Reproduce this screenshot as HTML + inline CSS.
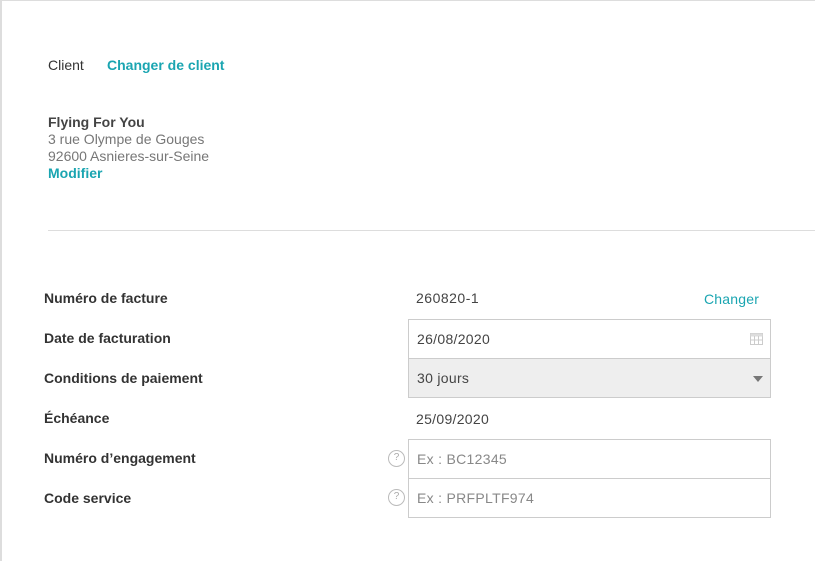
<!DOCTYPE html>
<html><head><meta charset="utf-8"><style>
*{margin:0;padding:0;box-sizing:border-box}
body{width:815px;height:561px;background:#fff;font-family:"Liberation Sans",sans-serif;position:relative;overflow:hidden;color:#333}
.frame{position:absolute;left:0;top:0;width:815px;height:561px;border-left:2px solid #ddd;border-top:1px solid #ddd}
.t{position:absolute;font-size:14px;line-height:17px;white-space:nowrap}
.teal{color:#1aa5b1;font-weight:bold}
.gray{color:#777}
.lbl{position:absolute;left:44px;font-size:14px;color:#333;font-weight:bold;letter-spacing:0px}
.box{position:absolute;left:408px;width:363px;border:1px solid #ccc;background:#fff;font-size:14px;padding-left:8px;color:#444;letter-spacing:0.3px}
.q{position:absolute;left:388px;width:17px;height:17px;border:1.5px solid #bbb;border-radius:50%;color:#aaa;font-size:10px;text-align:center;line-height:14px}
</style></head><body>
<div class="frame"></div>
<div class="t" style="left:48px;top:57px;color:#333">Client</div>
<div class="t teal" style="left:107px;top:57px">Changer de client</div>
<div class="t" style="left:48px;top:114px;color:#444;font-weight:bold">Flying For You</div>
<div class="t gray" style="left:48px;top:131px">3 rue Olympe de Gouges</div>
<div class="t gray" style="left:48px;top:148px">92600 Asnieres-sur-Seine</div>
<div class="t teal" style="left:48px;top:165px">Modifier</div>
<div style="position:absolute;left:48px;top:230px;width:767px;height:1px;background:#ddd"></div>

<div class="lbl" style="top:290px">Numéro de facture</div>
<div class="t" style="left:416px;top:290px;color:#444;letter-spacing:0.5px">260820-1</div>
<div class="t teal" style="left:704px;top:291px;font-weight:normal;letter-spacing:0.2px">Changer</div>

<div class="lbl" style="top:330px">Date de facturation</div>
<div class="box" style="top:319px;height:40px;line-height:38px">26/08/2020
<svg style="position:absolute;right:7px;top:13px" width="13" height="12" viewBox="0 0 13 12"><rect x="0.5" y="0.5" width="12" height="11" fill="none" stroke="#ccc"/><rect x="0.5" y="0.5" width="12" height="3" fill="#ddd"/><path d="M4.5 3v9M8.5 3v9M0 7h13" stroke="#ccc"/></svg></div>

<div class="lbl" style="top:370px">Conditions de paiement</div>
<div class="box" style="top:358px;height:40px;line-height:38px;background:#eee">30 jours
<svg style="position:absolute;right:7px;top:17px" width="10" height="6"><path d="M0 0h10L5 6z" fill="#777"/></svg></div>

<div class="lbl" style="top:410px">Échéance</div>
<div class="t" style="left:416px;top:411px;color:#444;letter-spacing:0.3px">25/09/2020</div>

<div class="lbl" style="top:450px">Numéro d’engagement</div>
<div class="q" style="top:450px">?</div>
<div class="box" style="top:439px;height:40px;line-height:38px;color:#888">Ex : BC12345</div>

<div class="lbl" style="top:490px">Code service</div>
<div class="q" style="top:489px">?</div>
<div class="box" style="top:478px;height:40px;line-height:38px;color:#888">Ex : PRFPLTF974</div>
</body></html>
